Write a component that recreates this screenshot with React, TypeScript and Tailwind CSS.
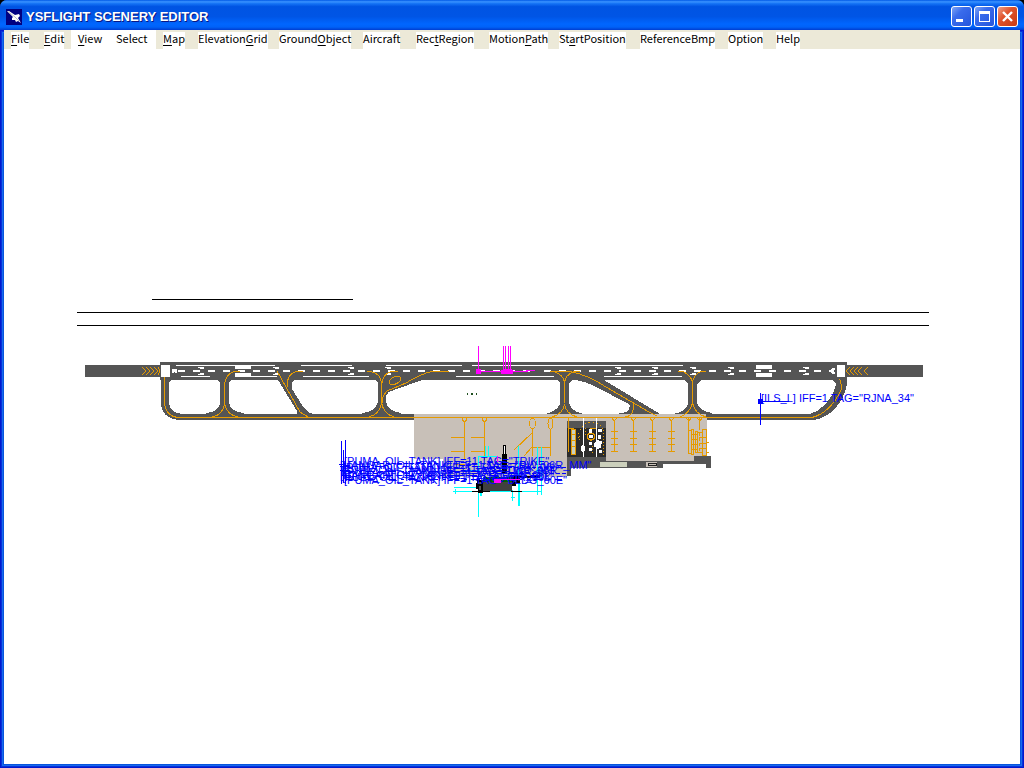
import React from 'react';

type MenuItem = { label: string; width: string; hotkey?: number; active?: boolean };

const menuItems: MenuItem[] = [
  { label: 'File', width: 'w-[33px]', hotkey: 0 },
  { label: 'Edit', width: 'w-[34px]', hotkey: 0 },
  { label: 'View', width: 'w-[38px]', hotkey: 0, active: true },
  { label: 'Select', width: 'w-[47px]', active: true },
  { label: 'Map', width: 'w-[35px]', hotkey: 0 },
  { label: 'ElevationGrid', width: 'w-[81px]', hotkey: 9 },
  { label: 'GroundObject', width: 'w-[84px]', hotkey: 6 },
  { label: 'Aircraft', width: 'w-[53px]' },
  { label: 'RectRegion', width: 'w-[73px]', hotkey: 3 },
  { label: 'MotionPath', width: 'w-[70px]', hotkey: 6 },
  { label: 'StartPosition', width: 'w-[81px]', hotkey: 2 },
  { label: 'ReferenceBmp', width: 'w-[88px]' },
  { label: 'Option', width: 'w-[48px]' },
  { label: 'Help', width: 'w-[37px]' },
];

function MenuLabel({ label, hotkey }: { label: string; hotkey?: number }) {
  if (hotkey === undefined) return <>{label}</>;
  return (
    <>
      {label.slice(0, hotkey)}
      <span className="underline underline-offset-2">{label[hotkey]}</span>
      {label.slice(hotkey + 1)}
    </>
  );
}

function TitleBar() {
  const button =
    'h-[21px] w-[21px] rounded-[3px] border border-white flex items-center justify-center';
  return (
    <header className="flex h-[30px] shrink-0 items-center bg-[linear-gradient(180deg,#0058e6_0%,#3a93ff_6%,#1573f5_12%,#0054e3_22%,#0055e5_55%,#0066ff_80%,#0062f8_90%,#003dd0_100%)] pl-[6px] pr-[6px] pt-[3px]">
      <svg className="h-4 w-4 shrink-0" viewBox="0 0 16 16" aria-hidden="true">
        <rect width="16" height="16" fill="#000080" />
        <path d="M1 2 L3 2 L9 6 L13 5 L14 7 L12 9 L15 14 L12 12 L10 13 L9 11 L6 11 L6 9 L7 8 Z" fill="#fff" />
        <path d="M2 2.500 L9 8 L13 12" stroke="#a8a8a8" strokeWidth=".7" fill="none" />
      </svg>
      <h1 className="ml-1 flex-1 font-['Liberation_Sans',Arial,sans-serif] text-[13px] font-bold leading-4 text-white [text-shadow:1px_1px_0_#0a1883]">
        YSFLIGHT SCENERY EDITOR
      </h1>
      <div className="flex gap-[2px]">
        <button aria-label="Minimize" className={`${button} bg-[linear-gradient(135deg,#7fa5f5,#3a6cec_35%,#2455dc)]`}>
          <svg width="19" height="19" viewBox="0 0 19 19" shapeRendering="crispEdges">
            <rect x="4" y="12" width="7" height="3" fill="#fff" />
          </svg>
        </button>
        <button aria-label="Maximize" className={`${button} bg-[linear-gradient(135deg,#7fa5f5,#3a6cec_35%,#2455dc)]`}>
          <svg width="19" height="19" viewBox="0 0 19 19" shapeRendering="crispEdges">
            <path d="M4 4h11v11h-11z M5 7v7h9v-7z" fill="#fff" fillRule="evenodd" />
          </svg>
        </button>
        <button aria-label="Close" className={`${button} bg-[linear-gradient(135deg,#f0a088,#e0532c_40%,#c83a10)]`}>
          <svg width="19" height="19" viewBox="0 0 19 19">
            <path d="M5 5l9 9M14 5l-9 9" stroke="#fff" strokeWidth="2.4" />
          </svg>
        </button>
      </div>
    </header>
  );
}

function MenuBar() {
  return (
    <nav className="flex h-[19px] shrink-0 bg-[#ece9d8] font-['Noto_Sans_CJK_JP',sans-serif] text-[11px] text-black">
      {menuItems.map(({ label, width, hotkey, active }) => (
        <button
          key={label}
          className={`flex whitespace-nowrap pl-[7px] pt-[2px] ${width} ${active ? 'bg-white' : ''}`}
        >
          <span className="bg-white leading-[13px]">
            <MenuLabel label={label} hotkey={hotkey} />
          </span>
        </button>
      ))}
    </nav>
  );
}

// touchdown zone markings, left edge of each pair
const touchdownMarks = [198, 273, 348, 385, 615, 652, 690, 728, 803];

const stands = [614, 633, 652, 671];

// object labels stacked over the terminal area
const objectLabels = [
  { x: 344, y: 465, text: '[PUMA_OIL_TANK] IFF=11 TAG="TRIKE"' },
  { x: 340, y: 469, text: '[HANGAR_OIL_TANK] IFF=1 TAG="RW_06R_MM"' },
  { x: 343, y: 471, text: '[PUMA_OIL_TANK] IFF=11 TAG="TRK_06"' },
  { x: 341, y: 474, text: '[FUEL_OIL_TANK] IFF=11 TAG="TWR_06R"' },
  { x: 344, y: 476, text: '[PUMA_OIL_TANK] IFF=1 TAG="HGR_06"' },
  { x: 340, y: 479, text: '[HANGAR_OIL_TANK] IFF=1 TAG="S_06L"' },
  { x: 342, y: 481, text: '[FUEL_OIL_TANK] IFF=1 TAG="RDR_06L"' },
  { x: 344, y: 484, text: '[PUMA_OIL_TANK] IFF=1 TAG="BLDG_60E"' },
];

function Runway() {
  return (
    <g>
      <g fill="#555">
        <rect x="85" y="365" width="76" height="12" />
        <rect x="846" y="365" width="77" height="12" />
        <path d="M161 376 H846 L847 384 Q844 402 830 413 Q821 420 810 420 H179 Q161 418 161 402 Z" />
        <rect x="160" y="362" width="687" height="18" />
      </g>

      {/* grass between the taxiways */}
      <g fill="#fff">
        <path d="M171 380 H218 L220 383 V404 Q218 412 206 413 V414 H182 Q169 412 169 402 V383 Z" />
        <path d="M231 380 H278 L297 411 L297 414 H244 V413 Q231 412 229 403 V383 Z" />
        <path d="M294 380 H375 L378 383 V402 Q375 412 362 413 V414 H313 Q306 412 302 405 L292 389 V383 Z" />
        <path d="M422 380 H557 L560 383 V404 Q556 412 545 414 H401 V413 Q388 411 386 402 V396 Q387 392 394 390 Z" />
        <path d="M572 380 Q582 380 594 386 L629 404 Q631 407 627 412 L616 414 H583 Q571 411 569 403 V384 Z" />
        <path d="M604 380 H684 L688 384 V404 Q685 412 673 414 H660 Z" />
        <path d="M701 380 H833 L836 384 Q833 400 817 411 L810 414 H712 V413 Q699 411 697 403 V384 Z" />
      </g>

      <g fill="#fff">
        <rect x="161" y="365" width="9" height="12" />
        <rect x="837" y="365" width="8" height="12" />
        <path d="M172 369h5v4h-2v-1h-1v1h-2z" />
        <path d="M829 370h2v-1h1v-1h3v2h-1v2h1v2h-3v-1h-1v-1h-2z" />
        <path d="M176 365h99v1h-99z M301 365h51v1h-51z M386 365h76v1h-76z M472 365h211v1h-211z" />
        <path d="M181 376h29v1h-29z M251 376h26v1h-26z M303 376h66v1h-66z M456 376h98v1h-98z M604 376h78v1h-78z" />
        <path d="M235 365h16v4h-16z M235 373h16v4h-16z M756 365h16v4h-16z M756 373h16v4h-16z" />
        {touchdownMarks.map((x) => (
          <path key={x} d={`M${x} 367h6v2h-4v-1h-2z M${x} 374h2v-1h4v2h-6z`} />
        ))}
      </g>
      <path d="M178 371H538" stroke="#fff" strokeWidth="2" strokeDasharray="7 8" />
      <path d="M544 371H829" stroke="#fff" strokeWidth="2" strokeDasharray="7 8" />
    </g>
  );
}

function TaxiLines() {
  return (
    <g fill="none" stroke="#e69b00">
      <path d="M142 367l4 4l-4 4M146 367l4 4l-4 4M150 367l4 4l-4 4M154 367l4 4l-4 4M158 367l2 4l-2 4" />
      <path d="M850 367l-4 4l4 4M854 367l-4 4l4 4M858 367l-4 4l4 4M862 367l-4 4l4 4M868 367l-4 4l4 4" />
      <path d="M164.500 377V403Q166 416 178 417.500H812Q830 413 841 390Q842 382 839 379" />
      <path d="M240 371.500H234Q225 375 224.500 385V405M212 417Q223 415 224.500 404Q227 415 238 417" />
      <path d="M277 371L300 412L308 417M303 371.500H296Q286 375 287.500 387" />
      <path d="M367 371.500H371Q381 374 381.500 383V403M398 371.500H391Q383 374 382 383M369 417Q380 414 381.500 403Q384 414 394 417" />
      <path d="M449 371.500H432Q420 374 406 383L387 391Q382 396 382 403" />
      <ellipse cx="395" cy="380.500" rx="6.500" ry="3.500" transform="rotate(-25 395 380.500)" />
      <path d="M550 371.500H554Q564 375 564.500 383V403M580 371.500H574Q565 375 564.500 383M552 417Q563 414 564.500 404Q566 414 577 417" />
      <path d="M552 371.500H570Q588 375 606 387L649 412L657 416M633 402V410Q632 416 625 417" />
      <path d="M678 371.500H683Q692 376 692.500 383V403M706 371.500H701Q693 375 692.500 383M680 417Q690 413 692.500 403Q695 414 706 417" />
    </g>
  );
}

function Apron() {
  return (
    <g>
      <path d="M414 414H706V417H707V456H694V461H567V477H443V459H414Z" fill="#c8c0b8" />
      <g fill="#555">
        <path d="M567 421h39v40h57v7h-92v8h-4z" />
        <path d="M663 461h31v-5h17v12h-5v-4h-43z" />
        <rect x="567" y="428" width="39" height="29" fill="#2c2c2c" />
      </g>
      <rect x="600" y="462" width="27" height="5" fill="#ccd0bc" />
      <path d="M646 462h11v5h-11z" fill="#c8c0b8" />
      <path d="M648 466v-3h9M649 465.500h7v-2h-5" fill="none" stroke="#222" />

      {/* terminal building */}
      <rect x="572" y="430" width="3" height="24" fill="#ccd0bc" />
      <g fill="none" stroke="#e69b00">
        <path d="M568.500 418V452M571.500 429.500h4v25h-4zM571 434.500h5M571 440.500h5M571 446.500h5" />
        <path d="M569 428.500H574M590 428.500H596" />
        <path d="M578 438Q579 424 591 422Q599 423 603 429" strokeDasharray="1 3" />
        <path d="M579.500 436V441M585.500 428V436M603.500 430V455" strokeDasharray="1 2" />
        <path d="M592.500 446V455" strokeDasharray="1 2" />
        <circle cx="591" cy="436.500" r="3.500" strokeWidth="1.500" />
      </g>
      <g fill="#fff">
        <path d="M583 418h1v39h-1z M596 418h1v39h-1z" />
        <path d="M582 445h2v1h1v5h-1v1h-2v-1h-1v-5h1z M589 429h3v4h-3z M589 435h4v3h-4z M589 442h3v3h-3z M589 448h3v3h-3z" />
        <path d="M598 429h4v3h-4z M598 435h3v4h-3z M595 442h2v-2h2v1h3v3h-1v4h-2v1h-3v-2h-2v-4h1z M599 450h3v3h-3z" />
      </g>

      {/* parking stands */}
      <g fill="none" stroke="#e69b00">
        <path d="M414 417.500H707" />
        {stands.map((x) => (
          <path
            key={x}
            d={`M${x}.5 420V451M${x - 2} 418l2 3l3 -3M${x - 3} 431.500h7M${x - 3} 438.500h7M${x - 3} 444.500h7M${x - 3} 451.500h7`}
          />
        ))}
        <path d="M688.500 418V454M699.500 418V430M686 418l3 3l2 -3M697 418l3 3l2 -3" />
        <path d="M691.500 429.500h2v25h-2zM695.500 431.500h2v21h-2zM702.500 429.500h4v26h-4z" />
        <path d="M688 430.500h4M688 453.500h4M697 432.500h5M697 452.500h5M707 442.500h2M707 452.500h2" />
        <path d="M691 434.500h6M691 439.500h6M691 444.500h6M691 449.500h6M699 437.500h8M699 443.500h8M699 448.500h8" />
        <path d="M699.500 433V453" strokeDasharray="3 2" />
        <path d="M464.500 422V460M484.500 422V460M451 437.500h13M451 451.500h13M471 437.500h13M471 451.500h13M455 464.500h10" />
        <path d="M462.500 418v2l2 2l2 -2v-2M482.500 418v2l2 2l2 -2v-2" />
        <path d="M532.500 429V456M550.500 429V456M532 447.500H551M514 450L532 433M524 456L532 447" />
        <ellipse cx="532.500" cy="423.500" rx="3" ry="5.500" />
        <ellipse cx="550.500" cy="423.500" rx="2.500" ry="5.500" />
      </g>
    </g>
  );
}

function SceneryObjects() {
  return (
    <g>
      <g stroke="#f0f">
        <path d="M478.500 346V371M503.500 346V371M505.500 346V371M508.500 346V371M510.500 346V371M477 371.500H528M526 370.500h9" fill="none" />
        <path d="M476.500 369.500h4v4h-4zM501.500 370.500h11v3h-11zM504.500 369.500h7v3h-7z" fill="#f0f" />
      </g>
      <path d="M467 393h1v2h-1z M471 393h2v2h-2z M476 393h1v2h-1z" fill="#205020" />

      <g fill="none" stroke="#0ff">
        <path d="M478.500 457V517M478 456.500H498M485.500 446V457M488.500 446V457M462 470.500H480M454 487.500H478M453 491.500H542M455 489v5" />
        <path d="M537.500 447V495M541.500 447V495M518.500 446V478M512.500 490V501M515 497.500h-4M535 491.500h4M545 470H536" />
        <path d="M519 477V506M481 492v4" strokeWidth="2" />
      </g>

      <rect x="483" y="477" width="30" height="5" fill="#006000" />
      <rect x="483" y="482" width="29" height="9" fill="#404040" />
      <path d="M477 480h6v13h-5v-4h-2v-6h1z M472 491h18v1h-18z M512 477h8v6h-4v3h-4z M511 491h11v1h-11z M513 476h27v2h-27z" fill="#000" />
      <path d="M478 482h3v2h-3z M479 486h2v4h-2z M514 480h2v2h-2z" fill="#555" />
      <path d="M503 445h3v9h1v20h-5v-20h1z" fill="#000" />
      <rect x="504" y="446" width="1" height="8" fill="#fff" />

      <g stroke="#00f" fill="none">
        <path d="M341.500 441V484M345.500 440V484M343.500 450V483M339 464.500h5M340 470.500h6" />
        <path d="M340 466.500H380M345 471.500H510M342 475.500H540M345 479.500H562" strokeDasharray="9 5 3 4" />
        <path d="M380 463.500H440M484 467.500H568M484 473.500H566" strokeDasharray="4 2" />
      </g>
      <g fill="#00f" className="font-['Liberation_Sans',Arial,sans-serif] text-[11px]">
        {objectLabels.map((o) => (
          <text key={o.y} x={o.x} y={o.y}>
            {o.text}
          </text>
        ))}
      </g>
      <path d="M497.500 456v6M496 479h4v3h-6v-3zM500 479.500H520" fill="#f0f" stroke="#f0f" />

      {/* ILS localizer */}
      <path d="M758 399h5v5h-5z" fill="#00f" />
      <path d="M760.500 393V425M760 401.500H789" stroke="#00f" fill="none" />
      <text x="761" y="402" fill="#00f" className="font-['Liberation_Sans',Arial,sans-serif] text-[11px]">
        [ILS_L] IFF=1 TAG="RJNA_34"
      </text>
    </g>
  );
}

export default function App() {
  return (
    <div className="bg-black">
      <div className="flex h-screen flex-col overflow-hidden rounded-t-[7px] bg-[#0855dd]">
        <TitleBar />
        <div className="flex min-h-0 flex-1 flex-col px-1 pb-1 shadow-[inset_0_0_0_1px_#0019cf,inset_0_0_0_2px_#0831d9,inset_0_0_0_3px_#166aee]">
          <MenuBar />
          <main className="min-h-0 flex-1 bg-white">
            <svg
              className="block h-full w-full"
              viewBox="4 49 1016 715"
              shapeRendering="crispEdges"
              role="img"
              aria-label="Airport map"
            >
              <path d="M152 299.500H353M77 312.500H929M77 325.500H929" stroke="#000" />
              <Runway />
              <Apron />
              <TaxiLines />
              <SceneryObjects />
            </svg>
          </main>
        </div>
      </div>
    </div>
  );
}
